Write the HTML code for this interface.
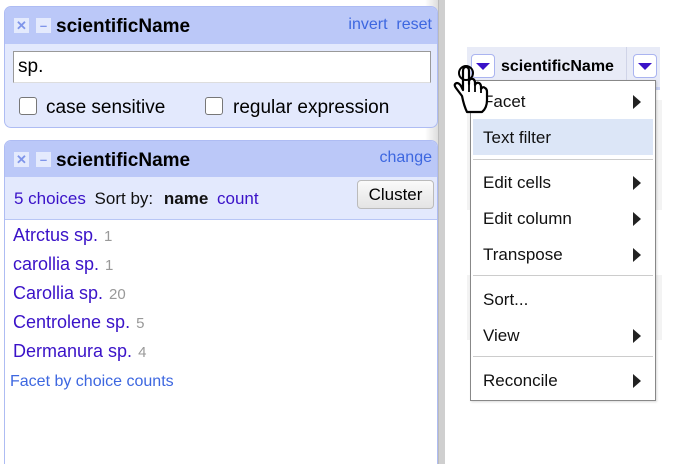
<!DOCTYPE html>
<html style="overflow:hidden;height:464px"><head><style>
*{margin:0;padding:0;box-sizing:border-box}
body{width:690px;height:464px;overflow:hidden;background:#fff;font-family:"Liberation Sans",Arial,sans-serif;position:relative}
.abs{position:absolute}
.panel{position:absolute;left:4px;width:434px;border:1px solid #aebcf3;border-radius:7px;background:#e3e9fd;overflow:hidden}
.hdr{height:37px;background:#bbc8f8;position:relative}
.ic{position:absolute;top:11px;width:15px;height:15px;background:#e4eafd;color:#7f95ea;font-size:13px;font-weight:bold;text-align:center;line-height:15px}
.title{position:absolute;left:51px;top:9px;font-size:19px;font-weight:bold;color:#000}
.lnk{color:#3d67e0}
.item{position:absolute;font-size:18px;color:#3a12c8}
.cnt{color:#999;font-size:15px;margin-left:6px}
.mi{position:absolute;left:12px;font-size:17px;color:#111}
.arr{position:absolute;right:14px;width:0;height:0;border-left:8px solid #222;border-top:7px solid transparent;border-bottom:7px solid transparent}
.sep{position:absolute;left:2px;right:2px;height:1px;background:#ccc}
.cb{position:absolute;width:18px;height:18px;border:1px solid #777;border-radius:3px;background:#fff}
</style></head><body>
<div class="abs" style="left:425px;top:0;width:13px;height:464px;background:linear-gradient(90deg,#fff,#ddd)"></div>
<div class="abs" style="left:438px;top:0;width:7px;height:464px;background:#cfcfcf;border-left:1px solid #bbb"></div>

<div class="panel" style="top:6px;height:122px">
 <div class="hdr">
  <div class="ic" style="left:9px">✕</div><div class="ic" style="left:31px">–</div>
  <div class="title">scientificName</div>
  <div class="abs lnk" style="right:5px;top:9px;font-size:16px">invert&nbsp; reset</div>
 </div>
 <div class="abs" style="left:8px;top:44px;width:418px;height:32px;background:#fff;border:1px solid #999;border-bottom-color:#ddd;font-size:19px;padding:4px 4px">sp.</div>
 <div class="cb" style="left:14px;top:90px"></div>
 <div class="abs" style="left:41px;top:90px;font-size:19px">case sensitive</div>
 <div class="cb" style="left:200px;top:90px"></div>
 <div class="abs" style="left:228px;top:90px;font-size:19px">regular expression</div>
</div>

<div class="panel" style="top:140px;height:340px;background:#fff">
 <div class="hdr" style="height:36px">
  <div class="ic" style="left:9px">✕</div><div class="ic" style="left:31px">–</div>
  <div class="title">scientificName</div>
  <div class="abs lnk" style="right:5px;top:8px;font-size:16px">change</div>
 </div>
 <div class="abs" style="left:0;top:36px;width:100%;height:43px;background:#e3e9fd;border-bottom:1px solid #b8c6f5"></div>
 <div class="abs" style="left:9px;top:48px;font-size:17px;color:#3a12c8">5 choices <span style="color:#111;margin-left:4px">Sort by: </span><b style="color:#111;margin-left:6px">name</b> <span style="margin-left:4px">count</span></div>
 <div class="abs" style="left:352px;top:39px;width:77px;height:29px;border:1px solid #bbb;border-radius:4px;background:linear-gradient(#fafafa,#e4e4e4);font-size:17px;text-align:center;line-height:27px">Cluster</div>
 <div class="item" style="left:8px;top:84px">Atrctus sp.<span class="cnt">1</span></div>
 <div class="item" style="left:8px;top:113px">carollia sp.<span class="cnt">1</span></div>
 <div class="item" style="left:8px;top:142px">Carollia sp.<span class="cnt">20</span></div>
 <div class="item" style="left:8px;top:171px">Centrolene sp.<span class="cnt">5</span></div>
 <div class="item" style="left:8px;top:200px">Dermanura sp.<span class="cnt">4</span></div>
 <div class="abs lnk" style="left:5px;top:232px;font-size:16px">Facet by choice counts</div>
</div>

<div class="abs" style="left:467px;top:47px;width:193px;height:40px;background:#e8ebf7"></div>
<div class="abs" style="left:626px;top:47px;width:1px;height:40px;background:#d0d4e8"></div>
<div class="abs" style="left:467px;top:87px;width:193px;height:3px;background:#c8d2f5"></div>
<div class="abs" style="left:471px;top:54px;width:24px;height:24px;border:1px solid #aab4f0;border-radius:4px;background:#fff"><div style="margin:8px auto 0;width:0;height:0;border-left:7px solid transparent;border-right:7px solid transparent;border-top:7px solid #3a12c8"></div></div>
<div class="abs" style="left:501px;top:58px;font-size:16px;font-weight:bold">scientificName</div>
<div class="abs" style="left:633px;top:54px;width:24px;height:24px;border:1px solid #aab4f0;border-radius:4px;background:#fff"><div style="margin:8px auto 0;width:0;height:0;border-left:7px solid transparent;border-right:7px solid transparent;border-top:7px solid #3a12c8"></div></div>
<div class="abs" style="left:467px;top:100px;width:195px;height:110px;background:#f3f3f3"></div>
<div class="abs" style="left:467px;top:275px;width:195px;height:65px;background:#f3f3f3"></div>

<div class="abs" style="left:470px;top:80px;width:186px;height:321px;background:#fff;border:1px solid #888;box-shadow:1px 1px 2px rgba(0,0,0,.15)">
 <div class="mi" style="top:11px">Facet</div><div class="arr" style="top:14px"></div>
 <div class="abs" style="left:2px;right:2px;top:38px;height:36px;background:#dce6f7"></div>
 <div class="mi" style="top:47px">Text filter</div>
 <div class="sep" style="top:78px"></div>
 <div class="mi" style="top:92px">Edit cells</div><div class="arr" style="top:95px"></div>
 <div class="mi" style="top:128px">Edit column</div><div class="arr" style="top:131px"></div>
 <div class="mi" style="top:164px">Transpose</div><div class="arr" style="top:167px"></div>
 <div class="sep" style="top:194px"></div>
 <div class="mi" style="top:209px">Sort...</div>
 <div class="mi" style="top:245px">View</div><div class="arr" style="top:248px"></div>
 <div class="sep" style="top:275px"></div>
 <div class="mi" style="top:290px">Reconcile</div><div class="arr" style="top:293px"></div>
</div>

<svg class="abs" style="left:450px;top:64px" width="40" height="52" viewBox="0 0 40 52">
<path d="M12 32 L6 24 Q3 20 7 19 Q9 19 11 22 L13 26 L13 7 Q13 3 16 3 Q19 3 19 7 L19 20 L19 17 Q20 14 23 15 Q25 16 25 19 L25 21 Q26 18 29 19 Q31 20 31 23 L31 25 Q33 22 35 24 Q37 25 37 28 L37 36 Q37 44 32 48 L17 48 Q14 42 12 32 Z" fill="#fff" stroke="#000" stroke-width="2.2" stroke-linejoin="round"/>
<path d="M19 20 L19 28 M25 21 L25 28 M31 25 L31 29" stroke="#000" stroke-width="1.8" fill="none"/>
<circle cx="16" cy="9" r="7" fill="none" stroke="#000" stroke-width="2"/>
</svg>
</body></html>
